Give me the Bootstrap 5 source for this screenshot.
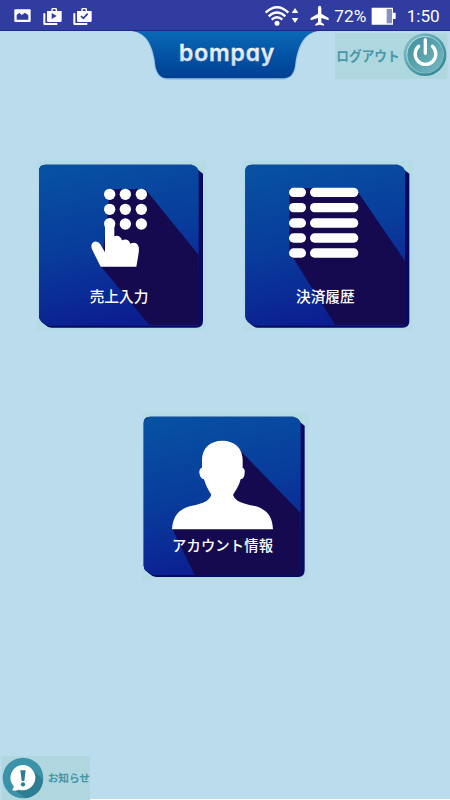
<!DOCTYPE html>
<html lang="ja">
<head>
<meta charset="utf-8">
<meta name="viewport" content="width=device-width, initial-scale=1">
<title>bompay</title>
<link href="https://cdn.jsdelivr.net/npm/bootstrap@5.3.0/dist/css/bootstrap.min.css" rel="stylesheet">
<style>
body{background:#bbdcec;font-family:"Noto Sans CJK JP",sans-serif}
.screen{width:450px;height:800px}
.status-bar{height:31px;background:#303c9f;border-bottom:1px solid #20298a}
.status-bar svg,.app-head svg,.tile-link svg,.notice svg{display:block}
.app-head{height:50px;padding-left:120px}
.menu-tiles{padding:74px 30px 0}
.tile-row{gap:20px}
.tile-account{margin:65px 0 0 104px}
.ui-text{font-family:Roboto,sans-serif}
.brand-text{font-family:Inter,sans-serif;font-weight:600;font-feature-settings:"cv11","ss03"}
.jp-text{font-family:"Noto Sans CJK JP",sans-serif}
</style>
<script src="https://cdn.jsdelivr.net/npm/bootstrap@5.3.0/dist/js/bootstrap.bundle.min.js"></script>
</head>
<body>
<div class="screen d-flex flex-column overflow-hidden">
  <div class="status-bar d-flex justify-content-between flex-shrink-0">
    <svg width="130" height="30" viewBox="0 0 390 90" aria-hidden="true">
      <rect x="43" y="28" width="49" height="38" rx="3" fill="#fff"/>
      <path d="M50 59V45l8-7 7 7 10-7 10 8v13z" fill="#303c9f"/>
      <g fill="#fff">
        <path d="M130 40h6v29h36v6h-38q-4 0-4-4zM141 33h13v-5q0-4 4-4h9q4 0 4 4v5h14v29q0 4-4 4h-36q-4 0-4-4zM158 28v5h9v-5z" fill-rule="evenodd"/>
        <path d="M220 40h6v29h36v6h-38q-4 0-4-4zM231 33h13v-5q0-4 4-4h9q4 0 4 4v5h14v29q0 4-4 4h-36q-4 0-4-4zM248 28v5h9v-5z" fill-rule="evenodd"/>
      </g>
      <path d="M155 39l15 9-15 9z" fill="#303c9f"/>
      <path d="M243 48l7 7 13-14" fill="none" stroke="#303c9f" stroke-width="5"/>
    </svg>
    <svg width="200" height="30" viewBox="0 0 600 90" role="img" aria-label="72% 1:50">
      <g fill="none" stroke="#fff" stroke-width="7">
        <path d="M47 38Q81 5 115 38M56 49Q81 26 106 49M65 59Q81 45 97 59"/>
      </g>
      <circle cx="81" cy="70" r="7.5" fill="#fff"/>
      <path d="M125 39l10-15 10 15zM125 54l10 15 10-15z" fill="#fff"/>
      <path d="M204 24q0-7 5-7t5 7v17l22 13v7l-22-7v13l8 6v4l-13-3-13 3v-4l8-6V54l-22 7v-7l22-13z" fill="#fff"/>
      <text x="253" y="67" font-size="49" fill="#fff" textLength="96" lengthAdjust="spacingAndGlyphs" class="ui-text">72%</text>
      <path d="M365 23h64v15h8v19h-8v17h-64z" fill="#fff"/>
      <rect x="410" y="27" width="16" height="43" fill="#8990c0"/>
      <text x="470" y="67" font-size="50" fill="#fff" textLength="99" lengthAdjust="spacingAndGlyphs" class="ui-text">1:50</text>
    </svg>
  </div>

  <header class="app-head d-flex flex-shrink-0">
    <svg width="210" height="50" viewBox="0 21 630 150" role="img" aria-label="bompay">
      <defs>
        <linearGradient id="tab" x1="0" y1="0" x2="0" y2="1"><stop offset="0" stop-color="#0869b6"/><stop offset="1" stop-color="#003f94"/></linearGradient>
        <linearGradient id="word" x1="0" y1="0" x2="0" y2="1"><stop offset="0" stop-color="#fff"/><stop offset="1" stop-color="#c5dcfa"/></linearGradient>
      </defs>
      <path d="M30 21C72 24 92 58 101 108Q103 168 148 168H483Q527 168 529 118C540 58 560 24 600 21z" fill="#9cc5df"/>
      <path d="M36 21C76 26 96 58 104 108Q107 163 142 163H490Q522 163 526 118C535 58 556 26 594 21z" fill="url(#tab)"/>
      <text x="179" y="112" font-size="69" class="brand-text" fill="#03296b" textLength="286">bompay</text>
      <text x="177" y="110" font-size="69" class="brand-text" fill="url(#word)" stroke="url(#word)" stroke-width="1" textLength="286" aria-hidden="true">bompay</text>
    </svg>
    <a href="#" class="d-block">
      <svg width="120" height="50" viewBox="15 21 360 150" role="img" aria-label="ログアウト">
        <defs>
          <linearGradient id="ring" x1="0" y1="0" x2="1" y2="1"><stop offset="0" stop-color="#8fc5cc"/><stop offset=".5" stop-color="#4f9fab"/><stop offset="1" stop-color="#2d7f8f"/></linearGradient>
          <linearGradient id="disc" x1="0" y1="0" x2="1" y2="1"><stop offset="0" stop-color="#3c8f9c"/><stop offset="1" stop-color="#79b9c1"/></linearGradient>
        </defs>
        <rect x="30" y="28" width="337" height="137" fill="#afd7df"/>
        <text x="34" y="110" font-size="40" font-weight="700" class="jp-text" fill="#4797a9" textLength="190" lengthAdjust="spacingAndGlyphs">ログアウト</text>
        <circle cx="300" cy="92" r="64" fill="url(#ring)"/>
        <circle cx="300" cy="92" r="56" fill="#b5dce1"/>
        <circle cx="301" cy="93" r="54" fill="url(#disc)"/>
        <path d="M281 67A31 31 0 1 0 322 67M301 47V88" fill="none" stroke="#fff" stroke-width="10" stroke-linecap="round"/>
      </svg>
    </a>
  </header>

  <main class="menu-tiles">
    <div class="tile-row d-flex">
      <a href="#" class="tile-link d-block">
        <svg width="185" height="185" viewBox="0 0 555 555" role="img" aria-label="売上入力">
          <defs>
            <linearGradient id="face" x1=".2" y1="0" x2=".45" y2="1"><stop offset="0" stop-color="#0751a3"/><stop offset=".5" stop-color="#083c9c"/><stop offset="1" stop-color="#0c1d90"/></linearGradient>
          </defs>
          <rect x="22" y="18" width="506" height="508" fill="#b5dbe5"/>
          <path d="M46 29H485L519 56V497Q519 518 498 518H64Q54 518 46 510L34 500Q27 494 27 484V48Q27 29 46 29z" fill="#0a0961"/>
          <path d="M46 29H485Q505 33 506 50V512H56Q46 510 36 501Q27 494 27 484V48Q27 29 46 29z" fill="url(#face)"/>
          <path d="M239 103H346L506 300V510H358L212 334 230 210z" fill="#150a50"/>
          <g fill="#fff">
            <circle cx="239" cy="118" r="17"/><circle cx="286" cy="118" r="17"/><circle cx="334" cy="118" r="17"/>
            <circle cx="239" cy="163" r="17"/><circle cx="286" cy="163" r="17"/><circle cx="334" cy="163" r="17"/>
            <circle cx="239" cy="206" r="17"/><circle cx="286" cy="207" r="17"/><circle cx="334" cy="207" r="17"/>
            <path d="M225 205Q226 195 239 195T253 205V244Q270 238 276 256Q294 248 301 266Q320 258 326 275Q328 285 325 300L319 335H212L186 283Q180 266 193 260Q204 257 211 268L225 292z"/>
          </g>
          <text x="179" y="440" font-size="44" font-weight="500" fill="#fff" class="jp-text" textLength="176">売上入力</text>
        </svg>
      </a>
      <a href="#" class="tile-link d-block">
        <svg width="185" height="185" viewBox="0 0 555 555" role="img" aria-label="決済履歴">
          <rect x="26" y="18" width="506" height="508" fill="#b5dbe5"/>
          <path d="M50 29H488L523 56V497Q523 518 502 518H68Q58 518 50 510L38 500Q31 494 31 484V48Q31 29 50 29z" fill="#0a0961"/>
          <path d="M50 29H488Q509 33 510 50V512H60Q50 510 40 501Q31 494 31 484V48Q31 29 50 29z" fill="url(#face)"/>
          <path d="M163 100H361L510 318V510H301L173 307H163z" fill="#150a50"/>
          <g fill="#fff">
            <rect x="162" y="98" width="51" height="28" rx="14"/><rect x="225" y="98" width="145" height="28" rx="14"/>
            <rect x="162" y="144" width="51" height="28" rx="14"/><rect x="225" y="144" width="145" height="28" rx="14"/>
            <rect x="162" y="190" width="51" height="28" rx="14"/><rect x="225" y="190" width="145" height="28" rx="14"/>
            <rect x="162" y="235" width="51" height="28" rx="14"/><rect x="225" y="235" width="145" height="28" rx="14"/>
            <rect x="162" y="280" width="51" height="28" rx="14"/><rect x="225" y="280" width="145" height="28" rx="14"/>
          </g>
          <text x="183" y="440" font-size="44" font-weight="500" fill="#fff" class="jp-text" textLength="176">決済履歴</text>
        </svg>
      </a>
    </div>
    <div class="tile-account">
      <a href="#" class="tile-link d-inline-block">
        <svg width="185" height="185" viewBox="0 0 555 555" role="img" aria-label="アカウント情報">
          <rect x="24" y="24" width="500" height="500" fill="#b5dbe5"/>
          <path d="M48 35H478L512 62V495Q512 516 493 516H66Q56 516 48 508L36 498Q29 492 29 482V54Q29 35 48 35z" fill="#0a0961"/>
          <path d="M48 35H478Q499 40 500 56V510H58Q48 508 38 499Q29 492 29 482V54Q29 35 48 35z" fill="url(#face)"/>
          <path d="M318 136L500 324V510H182L116 374 300 270z" fill="#150a50"/>
          <path d="M265 107C302 107 326 130 326 165V188Q334 190 332 204Q331 222 320 223C315 242 307 255 297 269C304 290 326 295 358 302C400 312 415 334 417 373H114C117 334 132 312 174 302C206 295 224 290 232 269C222 255 216 242 210 223Q199 222 196 204Q195 190 204 188V165C204 130 228 107 265 107z" fill="#fff"/>
          <text x="114" y="439" font-size="43" font-weight="500" fill="#fff" class="jp-text" textLength="303">アカウント情報</text>
        </svg>
      </a>
    </div>
  </main>

  <footer class="notice mt-auto flex-shrink-0 d-flex">
    <a href="#" class="d-block">
      <svg width="110" height="55" viewBox="0 0 330 165" role="img" aria-label="お知らせ">
        <rect x="5" y="33" width="265" height="132" fill="#b0d7df"/>
        <path d="M270 162h60v3h-60z" fill="#fff"/>
        <circle cx="69" cy="99" r="61" fill="#3b93a9"/>
        <path d="M96 71L129 104Q126 150 76 160L40 133z" fill="#2d7d93"/>
        <path d="M69 60A38 38 0 1 1 56 134Q47 139 36 136Q42 130 41 123A38 38 0 0 1 69 60z" fill="#fff"/>
        <path d="M61 76H77L73 108H65z" fill="#2d7d93"/><circle cx="69" cy="118" r="6.500" fill="#2d7d93"/>
        <text x="143" y="110" font-size="32" font-weight="700" class="jp-text" fill="#4595a8" textLength="127" lengthAdjust="spacingAndGlyphs">お知らせ</text>
      </svg>
    </a>
    <div class="flex-grow-1 align-self-end border-bottom border-white"></div>
  </footer>
</div>
</body>
</html>
